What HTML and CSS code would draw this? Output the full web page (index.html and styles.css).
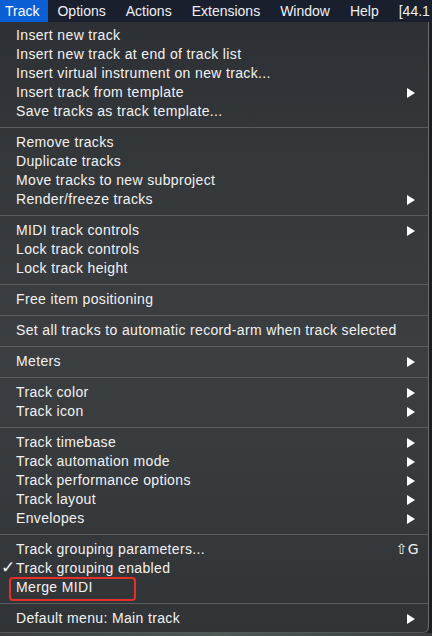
FILE: index.html
```html
<!DOCTYPE html>
<html>
<head>
<meta charset="utf-8">
<link rel="stylesheet" href="styles.css">
</head>
<body>
<div class="menubar">
  <span class="mb-item active">Track</span>
  <span class="mb-item">Options</span>
  <span class="mb-item">Actions</span>
  <span class="mb-item">Extensions</span>
  <span class="mb-item">Window</span>
  <span class="mb-item">Help</span>
  <span class="mb-item">[44.1</span>
</div>
<div class="stage">
  <div class="menu">
    <div class="row">Insert new track</div>
    <div class="row">Insert new track at end of track list</div>
    <div class="row">Insert virtual instrument on new track...</div>
    <div class="row sub">Insert track from template</div>
    <div class="row">Save tracks as track template...</div>
    <div class="sep"></div>
    <div class="row">Remove tracks</div>
    <div class="row">Duplicate tracks</div>
    <div class="row">Move tracks to new subproject</div>
    <div class="row sub">Render/freeze tracks</div>
    <div class="sep"></div>
    <div class="row sub">MIDI track controls</div>
    <div class="row">Lock track controls</div>
    <div class="row">Lock track height</div>
    <div class="sep"></div>
    <div class="row">Free item positioning</div>
    <div class="sep"></div>
    <div class="row">Set all tracks to automatic record-arm when track selected</div>
    <div class="sep"></div>
    <div class="row sub">Meters</div>
    <div class="sep"></div>
    <div class="row sub">Track color</div>
    <div class="row sub">Track icon</div>
    <div class="sep"></div>
    <div class="row sub">Track timebase</div>
    <div class="row sub">Track automation mode</div>
    <div class="row sub">Track performance options</div>
    <div class="row sub">Track layout</div>
    <div class="row sub">Envelopes</div>
    <div class="sep"></div>
    <div class="row">Track grouping parameters...<span class="shortcut">⇧G</span></div>
    <div class="row checked"><span class="check">✓</span>Track grouping enabled</div>
    <div class="row marked">Merge MIDI<span class="highlight-box"></span></div>
    <div class="sep"></div>
    <div class="row sub">Default menu: Main track</div>
  </div>
  <div class="edge"></div>
</div>
<div class="bottom-strip"></div>
</body>
</html>
```
FILE: styles.css
```css
html, body {
  margin: 0;
  padding: 0;
}
body {
  width: 432px;
  height: 636px;
  overflow: hidden;
  background: #24272b;
  font-family: "Liberation Sans", Arial, sans-serif;
  color: #f2f2f2;
}
.menubar {
  height: 22px;
  background: #1a1f2e;
  display: flex;
  align-items: center;
  font-size: 14px;
  white-space: nowrap;
  overflow: hidden;
}
.mb-item {
  height: 22px;
  line-height: 22px;
  padding: 0 10px;
  color: #eef0f4;
}
.mb-item.active {
  background: #0b5fd4;
  padding: 0 9px 0 5px;
  margin-right: -1px;
  color: #ffffff;
}
.stage {
  display: flex;
}
.menu {
  width: 428px;
  padding: 4px 0 4px 0;
  background: linear-gradient(180deg, #2d3034 0%, #35383b 25%, #3c3f42 55%, #36393c 80%, #313437 100%);
  border-right: 1px solid #6a6d70;
  border-bottom: 1px solid #55585b;
  border-bottom-right-radius: 6px;
  font-size: 14px;
  letter-spacing: 0.35px;
  position: relative;
}
.edge {
  width: 3px;
  background: #1c1e21;
}
.row {
  height: 19px;
  line-height: 19px;
  padding: 0 11px 0 16px;
  display: flex;
  justify-content: space-between;
  align-items: center;
  position: relative;
  white-space: nowrap;
}
.row.sub::after {
  content: "";
  width: 0;
  height: 0;
  border-top: 5px solid transparent;
  border-bottom: 5px solid transparent;
  border-left: 8px solid #ffffff;
  margin-right: 2px;
}
.sep {
  height: 12px;
  display: flex;
  align-items: center;
}
.sep::before {
  content: "";
  display: block;
  width: 100%;
  height: 1px;
  background: #5a5d60;
}
.shortcut {
  font-family: "DejaVu Sans", sans-serif;
  font-size: 14px;
  letter-spacing: 0.5px;
  margin-right: -2px;
}
.check {
  position: absolute;
  left: 1px;
  top: -1px;
  font-family: "DejaVu Sans", sans-serif;
  font-size: 17px;
  font-weight: bold;
}
.highlight-box {
  position: absolute;
  left: 9px;
  top: -1px;
  width: 123px;
  height: 20px;
  border: 2px solid #e3302a;
  border-radius: 4px;
}
.bottom-strip {
  height: 4px;
  background: linear-gradient(90deg, #3a3d40 0%, #4d5a56 50%, #3a3d40 100%);
}
```
